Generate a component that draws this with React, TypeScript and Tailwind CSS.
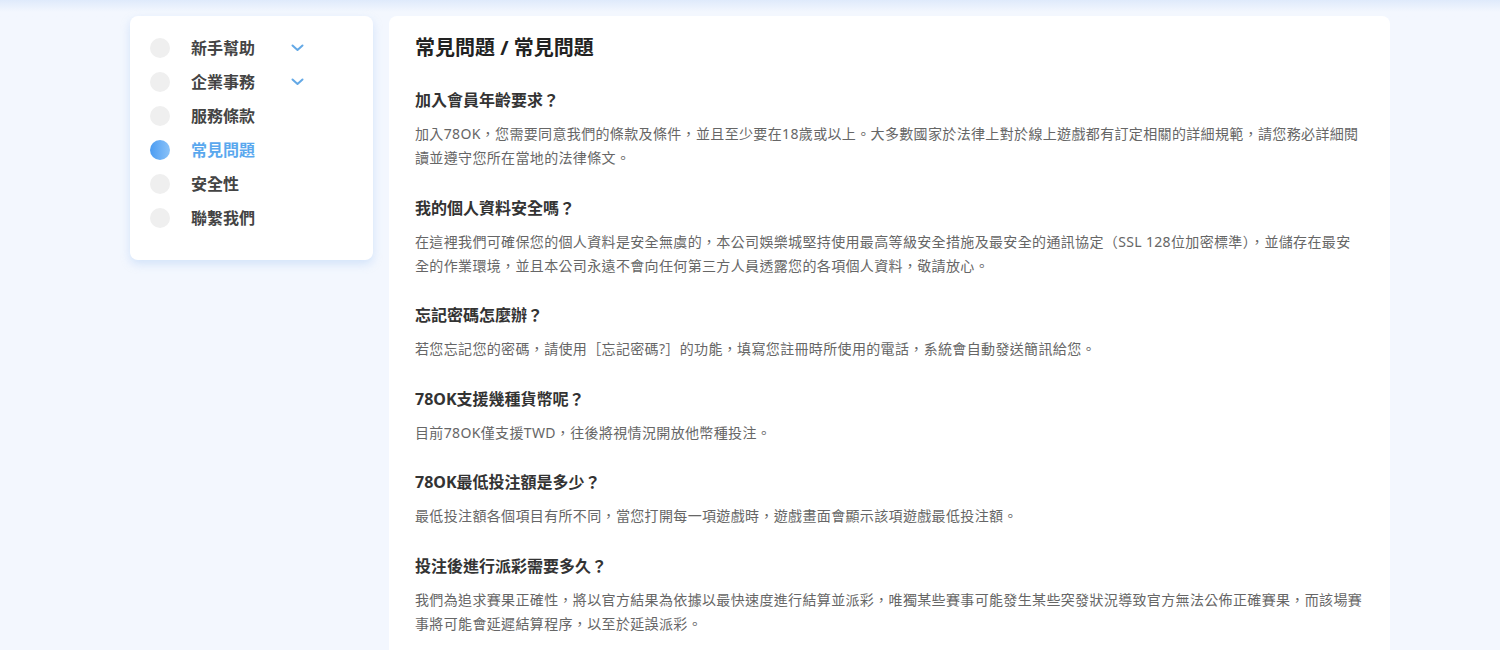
import React from "react";

const nav = [
  { label: "新手幫助", chevron: true },
  { label: "企業事務", chevron: true },
  { label: "服務條款" },
  { label: "常見問題", active: true },
  { label: "安全性" },
  { label: "聯繫我們" },
];

const faqs = [
  {
    q: "加入會員年齡要求？",
    a: "加入78OK，您需要同意我們的條款及條件，並且至少要在18歲或以上。大多數國家於法律上對於線上遊戲都有訂定相關的詳細規範，請您務必詳細閱讀並遵守您所在當地的法律條文。",
  },
  {
    q: "我的個人資料安全嗎？",
    a: "在這裡我們可確保您的個人資料是安全無虞的，本公司娛樂城堅持使用最高等級安全措施及最安全的通訊協定（SSL 128位加密標準），並儲存在最安全的作業環境，並且本公司永遠不會向任何第三方人員透露您的各項個人資料，敬請放心。",
  },
  {
    q: "忘記密碼怎麼辦？",
    a: "若您忘記您的密碼，請使用［忘記密碼?］的功能，填寫您註冊時所使用的電話，系統會自動發送簡訊給您。",
  },
  {
    q: "78OK支援幾種貨幣呢？",
    a: "目前78OK僅支援TWD，往後將視情況開放他幣種投注。",
  },
  {
    q: "78OK最低投注額是多少？",
    a: "最低投注額各個項目有所不同，當您打開每一項遊戲時，遊戲畫面會顯示該項遊戲最低投注額。",
  },
  {
    q: "投注後進行派彩需要多久？",
    a: "我們為追求賽果正確性，將以官方結果為依據以最快速度進行結算並派彩，唯獨某些賽事可能發生某些突發狀況導致官方無法公佈正確賽果，而該場賽事將可能會延遲結算程序，以至於延誤派彩。",
  },
];

function Chevron() {
  return (
    <svg width="13" height="8" viewBox="0 0 13 8" fill="none">
      <path d="M1.5 1.5L6.5 6L11.5 1.5" stroke="#64a9e6" strokeWidth="2" strokeLinecap="round" strokeLinejoin="round" />
    </svg>
  );
}

export default function App() {
  return (
    <div
      className="min-h-[650px] w-full bg-[#f3f7fe] bg-gradient-to-b from-[#dfeafb] via-[#f3f7fe] to-[#f3f7fe] bg-no-repeat [background-size:100%_24px]"
      style={{ fontFamily: '"Noto Sans", "Noto Sans CJK TC", sans-serif' }}
    >
      <div className="flex items-start gap-[16px] pl-[130px] pt-[16px]">
        <aside className="w-[243px] shrink-0 rounded-[8px] bg-white pt-[15px] pb-[25px] pl-[20px] shadow-[0_4px_10px_rgba(150,190,240,0.35)]">
          {nav.map((n) => (
            <div key={n.label} className="flex h-[34px] items-center">
              <span
                className={
                  n.active
                    ? "h-[20px] w-[20px] rounded-full bg-gradient-to-r from-[#4a9cf2] to-[#8ac2f8]"
                    : "h-[20px] w-[20px] rounded-full bg-[#efefef]"
                }
              />
              <span
                className={
                  "ml-[21px] w-[100px] text-[16px] font-bold leading-[24px] " +
                  (n.active ? "text-[#5aa8ee]" : "text-[#444444]")
                }
              >
                {n.label}
              </span>
              {n.chevron && <Chevron />}
            </div>
          ))}
        </aside>
        <main className="w-[1001px] shrink-0 rounded-t-[8px] bg-white px-[26px] pt-[18px] pb-[30px]">
          <h1 className="text-[20px] font-bold leading-[28px] text-[#222222]">常見問題 / 常見問題</h1>
          <div className="mt-[26px] flex flex-col gap-[25.5px]">
            {faqs.map((f) => (
              <section key={f.q}>
                <h2 className="text-[16px] font-bold leading-[24px] text-[#333333]">{f.q}</h2>
                <p className="mt-[10px] text-[14px] leading-[24px] tracking-[0.35px] text-[#666666]">{f.a}</p>
              </section>
            ))}
          </div>
        </main>
      </div>
    </div>
  );
}
